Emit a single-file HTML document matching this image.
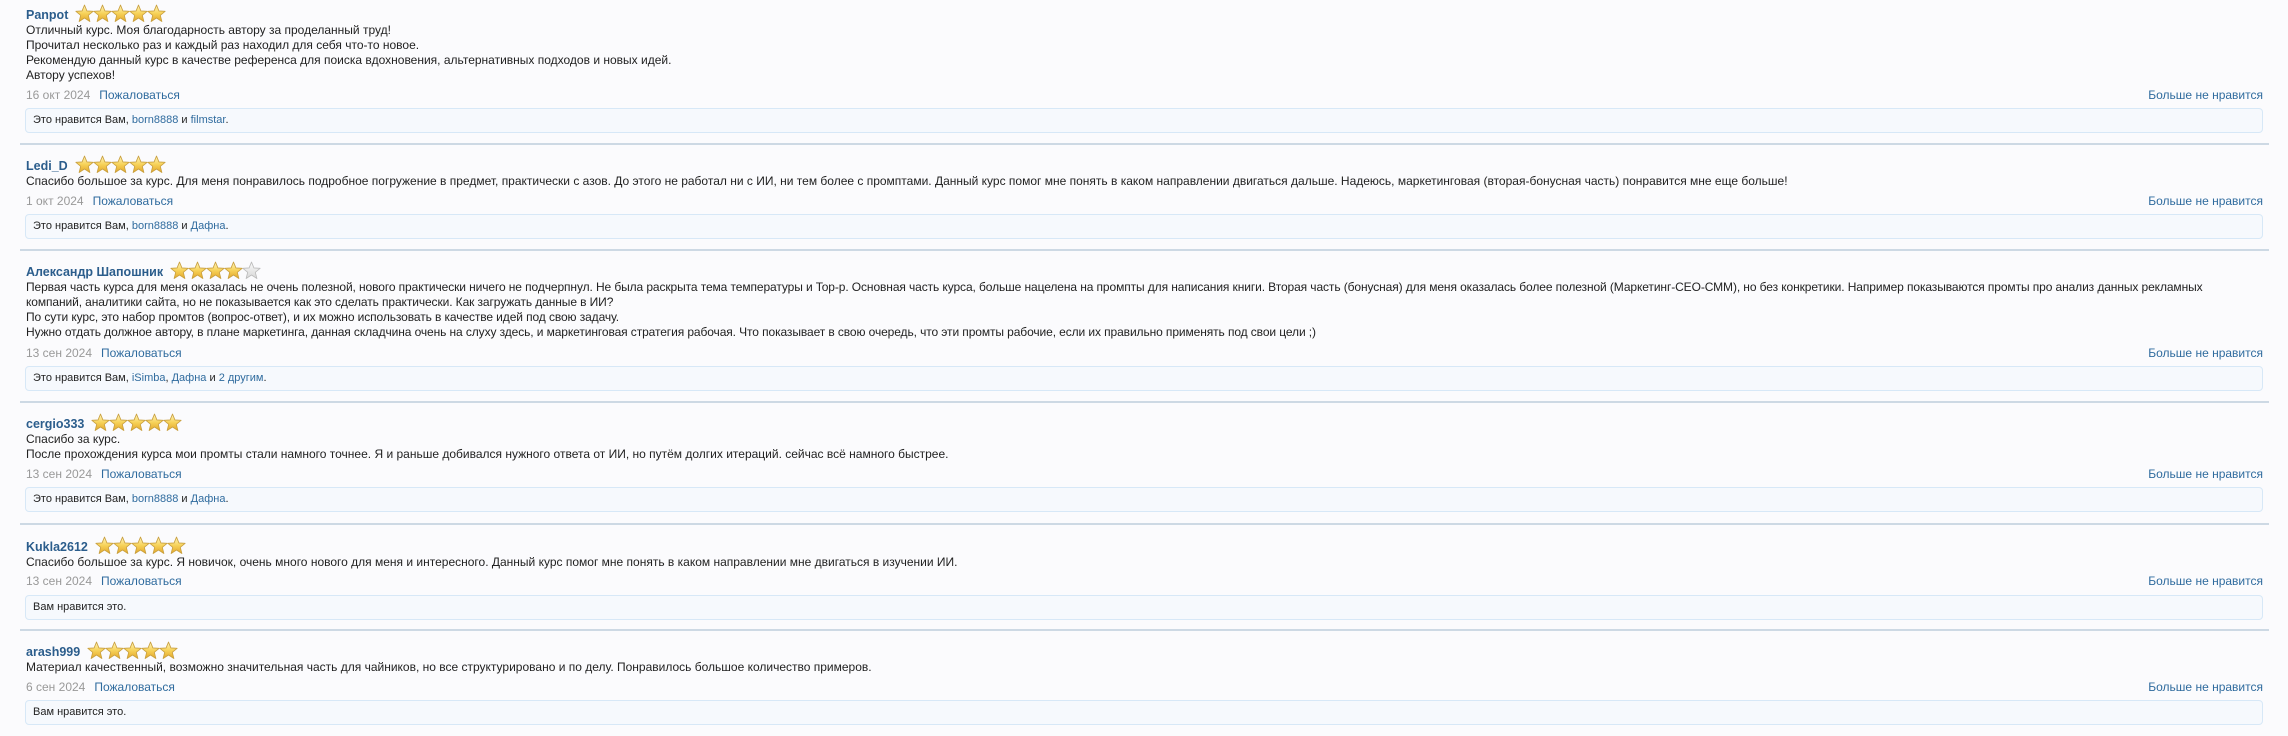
<!DOCTYPE html>
<html><head><meta charset="utf-8"><style>
html,body{margin:0;padding:0;background:#fbfbfd;}
body{width:2288px;height:736px;position:relative;overflow:hidden;font-family:"Liberation Sans",Arial,sans-serif;font-size:12px;color:#222;}
.a{position:absolute;white-space:nowrap;line-height:15px;}
.n{font-weight:bold;color:#2b5d8c;font-size:12.5px;left:26px;}
.n svg{vertical-align:-4px;margin-left:7px;}
.d{left:26px;color:#999;}
.d span{color:#2f6b9e;margin-left:9px;}
.r{right:25px;color:#2f6b9e;}
.b{position:absolute;left:25px;width:2236px;height:23px;border:1px solid #d7e8f7;border-radius:4px;background:#f6f9fd;font-size:11px;line-height:23px;}
.b div{padding-left:7px;}
.b span{color:#2f6b9e;}
.s{position:absolute;left:20px;width:2249px;height:2px;background:#cdd9e4;}
.tight{letter-spacing:-0.06px;}
</style></head><body>
<svg width="0" height="0" style="position:absolute"><defs>
<linearGradient id="g" x1="0" y1="0" x2="0" y2="1"><stop offset="0" stop-color="#fff6c0"/><stop offset=".5" stop-color="#f7d35a"/><stop offset="1" stop-color="#e3a72a"/></linearGradient>
<linearGradient id="h" x1="0" y1="0" x2="0" y2="1"><stop offset="0" stop-color="#fafafa"/><stop offset="1" stop-color="#d8d8d8"/></linearGradient>
<symbol id="st" viewBox="0 0 18 18"><path d="M9 1 L11.3 6.6 L17.2 6.9 L12.6 10.7 L14.1 16.6 L9 13.3 L3.9 16.6 L5.4 10.7 L0.8 6.9 L6.7 6.6 Z" fill="url(#g)" stroke="#c9a040" stroke-width=".8" stroke-linejoin="round"/></symbol>
<symbol id="sg" viewBox="0 0 18 18"><path d="M9 1 L11.3 6.6 L17.2 6.9 L12.6 10.7 L14.1 16.6 L9 13.3 L3.9 16.6 L5.4 10.7 L0.8 6.9 L6.7 6.6 Z" fill="url(#h)" stroke="#bbb" stroke-width=".8" stroke-linejoin="round"/></symbol>
</defs></svg>

<!-- 1 -->
<div class="a n" style="top:4px">Panpot<svg width="92" height="19"><use href="#st" x="0" width="19" height="19"/><use href="#st" x="18" width="19" height="19"/><use href="#st" x="36" width="19" height="19"/><use href="#st" x="54" width="19" height="19"/><use href="#st" x="72" width="19" height="19"/></svg></div>
<div class="a" style="left:26px;top:23px">Отличный курс. Моя благодарность автору за проделанный труд!<br>Прочитал несколько раз и каждый раз находил для себя что-то новое.<br>Рекомендую данный курс в качестве референса для поиска вдохновения, альтернативных подходов и новых идей.<br>Автору успехов!</div>
<div class="a d" style="top:88px">16 окт 2024<span>Пожаловаться</span></div>
<div class="a r" style="top:88px">Больше не нравится</div>
<div class="b" style="top:108px"><div>Это нравится Вам, <span>born8888</span> и <span>filmstar</span>.</div></div>
<div class="s" style="top:143px"></div>

<!-- 2 -->
<div class="a n" style="top:155px">Ledi_D<svg width="92" height="19"><use href="#st" x="0" width="19" height="19"/><use href="#st" x="18" width="19" height="19"/><use href="#st" x="36" width="19" height="19"/><use href="#st" x="54" width="19" height="19"/><use href="#st" x="72" width="19" height="19"/></svg></div>
<div class="a" style="left:26px;top:174px">Спасибо большое за курс. Для меня понравилось подробное погружение в предмет, практически с азов. До этого не работал ни с ИИ, ни тем более с промптами. Данный курс помог мне понять в каком направлении двигаться дальше. Надеюсь, маркетинговая (вторая-бонусная часть) понравится мне еще больше!</div>
<div class="a d" style="top:194px">1 окт 2024<span>Пожаловаться</span></div>
<div class="a r" style="top:194px">Больше не нравится</div>
<div class="b" style="top:214px"><div>Это нравится Вам, <span>born8888</span> и <span>Дафна</span>.</div></div>
<div class="s" style="top:249px"></div>

<!-- 3 -->
<div class="a n" style="top:261px">Александр Шапошник<svg width="92" height="19"><use href="#st" x="0" width="19" height="19"/><use href="#st" x="18" width="19" height="19"/><use href="#st" x="36" width="19" height="19"/><use href="#st" x="54" width="19" height="19"/><use href="#sg" x="72" width="19" height="19"/></svg></div>
<div class="a tight" style="left:26px;top:280px;letter-spacing:-0.1px">Первая часть курса для меня оказалась не очень полезной, нового практически ничего не подчерпнул. Не была раскрыта тема температуры и Top-p. Основная часть курса, больше нацелена на промпты для написания книги. Вторая часть (бонусная) для меня оказалась более полезной (Маркетинг-СЕО-СММ), но без конкретики. Например показываются промты про анализ данных рекламных<br>компаний, аналитики сайта, но не показывается как это сделать практически. Как загружать данные в ИИ?<br>По сути курс, это набор промтов (вопрос-ответ), и их можно использовать в качестве идей под свою задачу.<br>Нужно отдать должное автору, в плане маркетинга, данная складчина очень на слуху здесь, и маркетинговая стратегия рабочая. Что показывает в свою очередь, что эти промты рабочие, если их правильно применять под свои цели ;)</div>
<div class="a d" style="top:346px">13 сен 2024<span>Пожаловаться</span></div>
<div class="a r" style="top:346px">Больше не нравится</div>
<div class="b" style="top:366px"><div>Это нравится Вам, <span>iSimba</span>, <span>Дафна</span> и <span>2 другим</span>.</div></div>
<div class="s" style="top:401px"></div>

<!-- 4 -->
<div class="a n" style="top:413px">cergio333<svg width="92" height="19"><use href="#st" x="0" width="19" height="19"/><use href="#st" x="18" width="19" height="19"/><use href="#st" x="36" width="19" height="19"/><use href="#st" x="54" width="19" height="19"/><use href="#st" x="72" width="19" height="19"/></svg></div>
<div class="a" style="left:26px;top:432px">Спасибо за курс.<br>После прохождения курса мои промты стали намного точнее. Я и раньше добивался нужного ответа от ИИ, но путём долгих итераций. сейчас всё намного быстрее.</div>
<div class="a d" style="top:467px">13 сен 2024<span>Пожаловаться</span></div>
<div class="a r" style="top:467px">Больше не нравится</div>
<div class="b" style="top:487px"><div>Это нравится Вам, <span>born8888</span> и <span>Дафна</span>.</div></div>
<div class="s" style="top:523px"></div>

<!-- 5 -->
<div class="a n" style="top:536px">Kukla2612<svg width="92" height="19"><use href="#st" x="0" width="19" height="19"/><use href="#st" x="18" width="19" height="19"/><use href="#st" x="36" width="19" height="19"/><use href="#st" x="54" width="19" height="19"/><use href="#st" x="72" width="19" height="19"/></svg></div>
<div class="a" style="left:26px;top:555px">Спасибо большое за курс. Я новичок, очень много нового для меня и интересного. Данный курс помог мне понять в каком направлении мне двигаться в изучении ИИ.</div>
<div class="a d" style="top:574px">13 сен 2024<span>Пожаловаться</span></div>
<div class="a r" style="top:574px">Больше не нравится</div>
<div class="b" style="top:595px"><div>Вам нравится это.</div></div>
<div class="s" style="top:629px"></div>

<!-- 6 -->
<div class="a n" style="top:641px">arash999<svg width="92" height="19"><use href="#st" x="0" width="19" height="19"/><use href="#st" x="18" width="19" height="19"/><use href="#st" x="36" width="19" height="19"/><use href="#st" x="54" width="19" height="19"/><use href="#st" x="72" width="19" height="19"/></svg></div>
<div class="a" style="left:26px;top:660px">Материал качественный, возможно значительная часть для чайников, но все структурировано и по делу. Понравилось большое количество примеров.</div>
<div class="a d" style="top:680px">6 сен 2024<span>Пожаловаться</span></div>
<div class="a r" style="top:680px">Больше не нравится</div>
<div class="b" style="top:700px"><div>Вам нравится это.</div></div>
</body></html>
